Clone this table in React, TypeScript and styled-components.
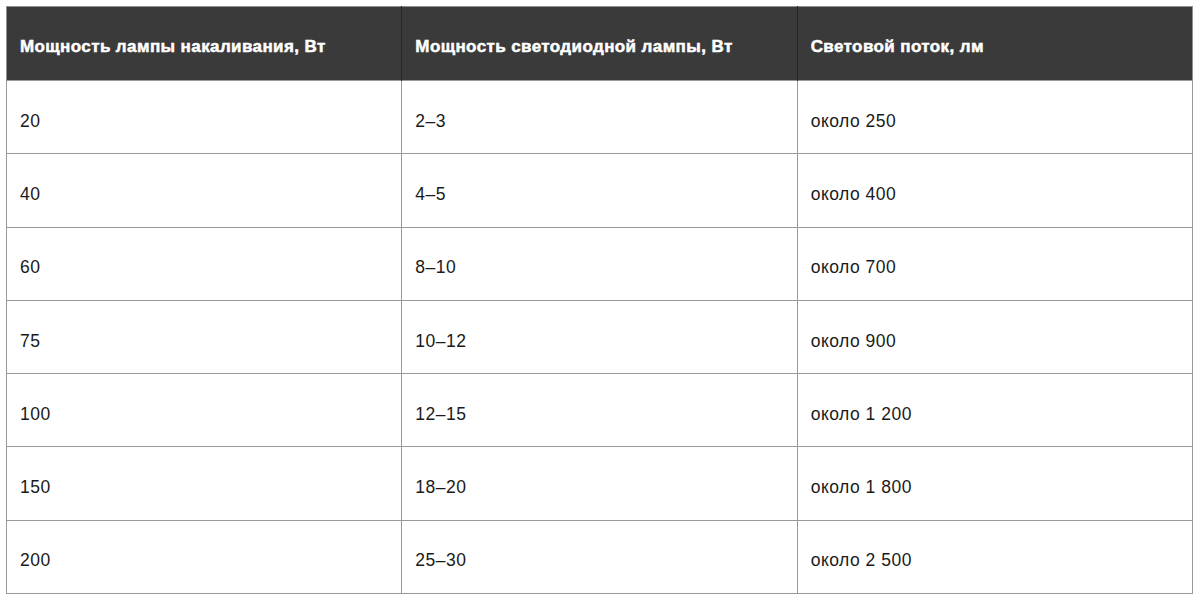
import React from 'react';
import styled, { createGlobalStyle } from 'styled-components';

const GlobalStyle = createGlobalStyle`
  body {
    margin: 0;
    background: #ffffff;
    font-family: "Liberation Sans", Arial, sans-serif;
  }
`;

const Page = styled.div`
  padding: 6px 7px 6px 6px;
`;

const Table = styled.table`
  width: 100%;
  border-collapse: collapse;
  table-layout: fixed;
  border: 1px solid #8f8f8f;
`;

const HeadCell = styled.th`
  box-sizing: border-box;
  background: #3a3a3a;
  color: #ffffff;
  height: 74px;
  padding: 6px 13px 0;
  text-align: left;
  font-size: 17px;
  font-weight: 700;
  letter-spacing: 0.4px;
  -webkit-text-stroke: 0.5px #ffffff;
  border-left: 1px solid #262626;
  &:first-child {
    border-left: none;
  }
`;

const Cell = styled.td`
  box-sizing: border-box;
  height: 73.3px;
  padding: 8px 13px 0;
  font-size: 17.5px;
  letter-spacing: 0.5px;
  color: #1a1a1a;
  border: 1px solid #999999;
`;

const rows: [string, string, string][] = [
  ['20', '2–3', 'около 250'],
  ['40', '4–5', 'около 400'],
  ['60', '8–10', 'около 700'],
  ['75', '10–12', 'около 900'],
  ['100', '12–15', 'около 1 200'],
  ['150', '18–20', 'около 1 800'],
  ['200', '25–30', 'около 2 500'],
];

export default function App() {
  return (
    <Page>
      <GlobalStyle />
      <Table>
        <thead>
          <tr>
            <HeadCell>Мощность лампы накаливания, Вт</HeadCell>
            <HeadCell>Мощность светодиодной лампы, Вт</HeadCell>
            <HeadCell>Световой поток, лм</HeadCell>
          </tr>
        </thead>
        <tbody>
          {rows.map((r) => (
            <tr key={r[0]}>
              {r.map((c, i) => (
                <Cell key={i}>{c}</Cell>
              ))}
            </tr>
          ))}
        </tbody>
      </Table>
    </Page>
  );
}
